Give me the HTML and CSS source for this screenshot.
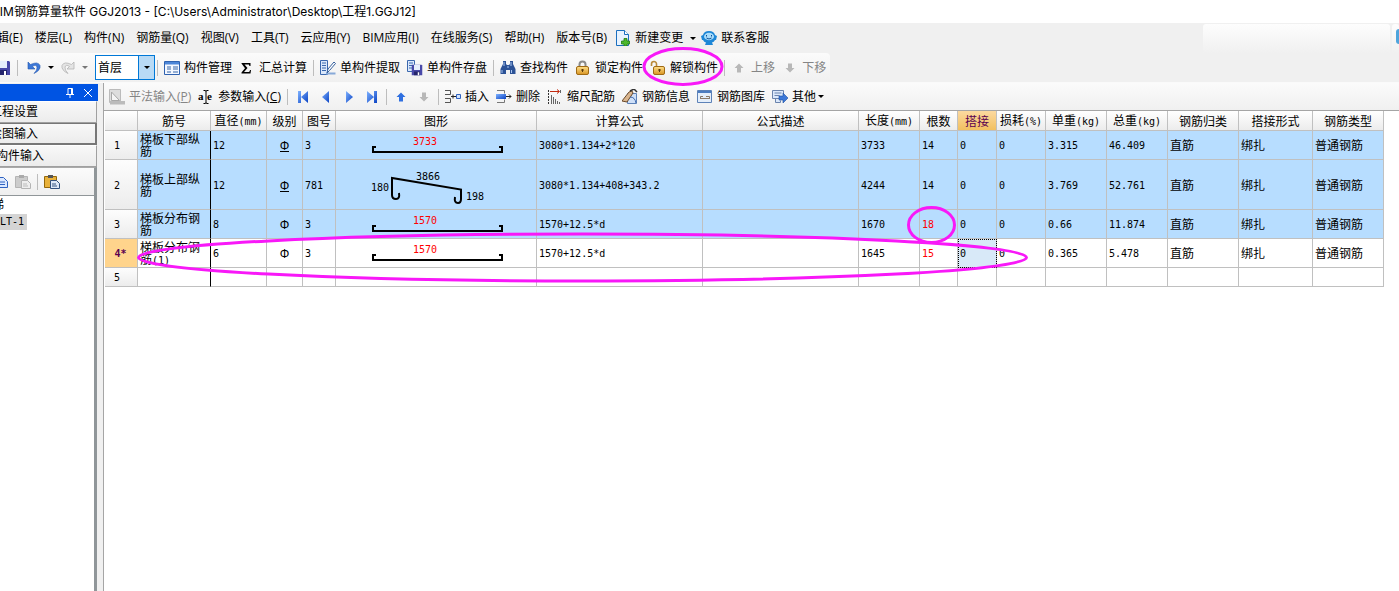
FILE: index.html
```html
<!DOCTYPE html>
<html lang="zh-CN">
<head>
<meta charset="utf-8">
<title>BIM钢筋算量软件 GGJ2013</title>
<link rel="stylesheet" href="styles.css">
</head>
<body>
<svg class="defs" width="0" height="0" aria-hidden="true">
  <defs>
    <linearGradient id="blue" x1="0" y1="0" x2="1" y2="1"><stop offset="0" stop-color="#7fb2ff"/><stop offset="1" stop-color="#0a43c4"/></linearGradient>
    <linearGradient id="gold" x1="0" y1="0" x2="0" y2="1"><stop offset="0" stop-color="#ffe08a"/><stop offset="1" stop-color="#d89422"/></linearGradient>
    <symbol id="up" viewBox="0 0 10 16"><path d="M5 3.5 9.5 8H7v4.500H3V8H.5z"/></symbol>
    <symbol id="down" viewBox="0 0 10 16"><path d="M5 12.500.5 8H3V3.500h4V8h2.500z"/></symbol>
    <symbol id="bar" viewBox="0 0 134 10"><path d="M6 3H3V8H132V3H129" fill="none" stroke="#000" stroke-width="2"/></symbol>
    <symbol id="save" viewBox="0 0 16 16"><path d="M1 1h13l1 1v13H1z" fill="#4848a8"/><path d="M4 1h8v7H4z" fill="#e6eefc"/><path d="M4 10h8v5H4z" fill="#24246c"/><path d="M9 11h2v4H9z" fill="#fff"/></symbol>
  </defs>
</svg>

<header class="title">BIM钢筋算量软件 GGJ2013 - [C:\Users\Administrator\Desktop\工程1.GGJ12]</header>

<nav class="menu">
  <button>编辑(E)</button><button>楼层(L)</button><button>构件(N)</button><button>钢筋量(Q)</button><button>视图(V)</button><button>工具(T)</button><button>云应用(Y)</button><button>BIM应用(I)</button><button>在线服务(S)</button><button>帮助(H)</button><button>版本号(B)</button>
  <button class="rich"><svg width="16" height="16" viewBox="0 0 16 16"><path d="M1.500.5h8l4 4v11h-12z" fill="#e8f3ff" stroke="#1b6fbf"/><path d="M9.500.5v4h4" fill="#fff" stroke="#1b6fbf"/><path d="M9 8.500h3v2.500h2.500v3H12V16H9v-2H6.500v-3H9z" fill="#4cb82c" stroke="#1e7a12" stroke-width=".8"/></svg>新建变更<i class="caret"></i></button>
  <button class="rich"><svg width="16" height="16" viewBox="0 0 16 16"><path d="M2 5Q3 1 8 1t6 4l2 1-1 4h-1q-1 2-3 2.500l1 2.500H4l1-2.500q-2-.5-3-2.500H1L0 6z" fill="#1d86d6"/><ellipse cx="8" cy="6.500" rx="5" ry="3.700" fill="#a9dcfb"/><path d="M5.500 5v1.500M10.500 5v1.500M5.500 8q2.500 2 5 0" stroke="#0d4f94" fill="none"/></svg>联系客服</button>
  <div class="glass"></div><div class="glass end"><span></span></div>
</nav>

<div class="bars">
  <div class="toolbar main-tools">
    <button class="icon" aria-label="保存"><svg width="16" height="16"><use href="#save"/></svg></button>
    <i class="sep"></i>
    <button class="icon undo" aria-label="撤销"><svg width="14" height="14" viewBox="0 0 14 14"><path d="M1 1v7h7L5.500 5.500Q9 3 10 6q.5 3-3 6.500Q14 9 13 4.500 11 0 3.500 3.500z" fill="#3c78d8" stroke="#2458b0" stroke-width=".6"/></svg><i class="caret"></i></button>
    <button class="icon redo" aria-label="恢复" disabled><svg width="14" height="14" viewBox="0 0 14 14"><path d="M13 1v7H6l2.500-2.500Q5 3 4 6q-.5 3 3 6.500Q0 9 1 4.500 3 0 10.500 3.500z" fill="#e4e4e4" stroke="#b4b4b4" stroke-width=".8"/></svg><i class="caret"></i></button>
    <div class="combo"><select aria-label="楼层"><option>首层</option></select></div>
    <i class="sep"></i>
    <button><svg width="16" height="16" viewBox="0 0 16 16"><path d="M.5 1.500h15v13H.5z" fill="#f4f8ff" stroke="#2f62b0"/><path d="M1 2h14v2.500H1z" fill="#4c86d8"/><path d="M3 7h4M3 9h4M3 12h4M9 7h5M9 9h5M9 12h5" stroke="#3465a8"/></svg>构件管理</button>
    <button><svg width="16" height="16" viewBox="0 0 16 16"><path d="M2.500 3.500V3h9v3h-1l-.7-1.500H5.500L8.500 8l-3.500 4h5.200l.9-2h.9l-.5 3.500h-9v-1L6 8.200z" fill="#000"/></svg>汇总计算</button>
    <i class="sep"></i>
    <button><svg width="16" height="16" viewBox="0 0 16 16"><path d="M.5.5h7v14h-7z" fill="#dbe8fb" stroke="#3b68ae"/><path d="M2 3h4M2 5.500h4M2 8h4M2 10.500h4" stroke="#3b68ae"/><path d="M6 12.500h9.500v2H6z" fill="#87a9d8"/><path d="m7 13 1-4 6-7 1.500 1.500-6 7z" fill="#fff" stroke="#345f9c"/></svg>单构件提取</button>
    <button><svg width="16" height="16" viewBox="0 0 16 16"><path d="M.5.5h7v11h-7z" fill="#dbe8fb" stroke="#3b68ae"/><path d="M2 3h4M2 5.500h3M2 8h3" stroke="#3b68ae"/><svg x="4" y="4" width="12" height="12"><use href="#save"/></svg></svg>单构件存盘</button>
    <i class="sep"></i>
    <button><svg width="16" height="16" viewBox="0 0 16 16"><path d="M3 1h3v3l1 1h2l1-1V1h3v3l2.500 5v5H10v-4H6v4H.5V9L3 4z" fill="#2c5296"/><path d="M4 2v4M11 2v4M2 10v3M11.500 10v3M7 7h2" stroke="#a9c6f2"/></svg>查找构件</button>
    <button><svg width="16" height="16" viewBox="0 0 16 16"><path d="M4.500 7V4.500a3 3 0 0 1 6 0V7" fill="none" stroke="#8b8b8b" stroke-width="2"/><rect x="1.500" y="6.500" width="12" height="8" rx="1.500" fill="url(#gold)" stroke="#a06a14"/><path d="M7.500 9v3M6 10h3" stroke="#5c3a08"/></svg>锁定构件</button>
    <button><svg width="16" height="16" viewBox="0 0 16 16"><path d="M1.500 6V4a2.500 2.500 0 0 1 5 0v4" fill="none" stroke="#b98a3a" stroke-width="1.600"/><rect x="3.500" y="6.500" width="11" height="8" rx="1.500" fill="url(#gold)" stroke="#a06a14"/><path d="M9.500 9v3M8 10h3" stroke="#5c3a08"/></svg>解锁构件</button>
    <i class="sep"></i>
    <button disabled><svg class="gray" width="16" height="16"><use href="#up"/></svg>上移</button>
    <button disabled><svg class="gray" width="16" height="16"><use href="#down"/></svg>下移</button>
  </div>
</div>

<div class="work">
  <aside class="side">
    <div class="side-head">
      <button aria-label="固定"><svg width="10" height="10" viewBox="0 0 10 10"><path d="M3 .5h4.500V6M3 .5V6M1 6.500h8M5 7v3M6.500 1v5" stroke="#fff" fill="none"/></svg></button>
      <button aria-label="关闭"><svg width="10" height="10" viewBox="0 0 10 10"><path d="m1 1 8 8M9 1 1 9" stroke="#fff"/></svg></button>
    </div>
    <button class="nav">工程设置</button>
    <button class="nav active">绘图输入</button>
    <button class="nav wide">单构件输入</button>
    <div class="side-box">
      <div class="side-tools">
        <button aria-label="复制"><svg width="16" height="16" viewBox="0 0 16 16"><path d="M3.500 3.500h8l4 4v6h-12z" fill="#dbe8ff" stroke="#2f62c0"/><path d="M6 8h7M6 10.500h7" stroke="#2f62c0"/></svg></button>
        <button aria-label="粘贴" disabled><svg width="16" height="16" viewBox="0 0 16 16"><path d="M.5 2.500h12v11H.5z" fill="#ccc" stroke="#b4b4b4"/><path d="M4 1h5v3H4z" fill="#aaa"/><path d="M6.500 6.500h6l3 3v5h-9z" fill="#eee" stroke="#b4b4b4"/><path d="M8 10h4M8 12h5" stroke="#bbb"/></svg></button>
        <i class="sep"></i>
        <button aria-label="粘贴到"><svg width="16" height="16" viewBox="0 0 16 16"><path d="M.5 2.500h12v11H.5z" fill="#e8b13a" stroke="#94680c"/><path d="M4 1h5v3H4z" fill="#555"/><path d="M6.500 6.500h6l3 3v5h-9z" fill="#dfe9f8" stroke="#34527f"/><path d="M8 10h4M8 12h5" stroke="#34527f"/></svg></button>
      </div>
      <ul class="tree"><li>梯</li><li><span class="mono picked">LT-1</span></li></ul>
    </div>
  </aside>

  <main class="pane">
    <div class="toolbar edit-tools">
      <button disabled><svg width="16" height="16" viewBox="0 0 16 16"><path d="M.5.500h11v13H.5z" fill="#ddd" stroke="#bbb"/><path d="m2.500 3 8 8.500h-8z" fill="#f4f4f4" stroke="#a8a8a8"/><path d="M1 12h15v3.500H1z" fill="#bbb"/></svg><span>平法输入(<u>P</u>)</span></button>
      <button><svg width="16" height="16" viewBox="0 0 16 16"><path d="M5.500 1.500h1.500q1 0 1 1 0-1 1-1h1.500M8 2.500v11M5.500 14.500h1.500q1 0 1-1 0 1 1 1h1.500" fill="none" stroke="#000"/><text class="ae" x="0" y="11">a</text><text class="ae" x="9" y="11">e</text></svg><span>参数输入(<u>C</u>)</span></button>
      <i class="sep lead"></i>
      <button class="step" aria-label="首个"><svg width="12" height="12" viewBox="0 0 12 12"><path d="M1 0h3v12H1zM11 0v12L4 6z" fill="url(#blue)"/></svg></button>
      <button class="step" aria-label="上一个"><svg width="12" height="12" viewBox="0 0 12 12"><path d="M9 0v12L2 6z" fill="url(#blue)"/></svg></button>
      <button class="step" aria-label="下一个"><svg width="12" height="12" viewBox="0 0 12 12"><path d="M3 0v12l7-6z" fill="url(#blue)"/></svg></button>
      <button class="step" aria-label="末个"><svg width="12" height="12" viewBox="0 0 12 12"><path d="M1 0v12l7-6zM8 0h3v12H8z" fill="url(#blue)"/></svg></button>
      <i class="sep"></i>
      <button class="step" aria-label="上移行"><svg width="12" height="16" fill="#2f6fe0"><use href="#up"/></svg></button>
      <button class="step" aria-label="下移行" disabled><svg class="gray" width="12" height="16"><use href="#down"/></svg></button>
      <i class="sep"></i>
      <button><svg width="16" height="16" viewBox="0 0 16 16"><path d="M0 1.500h5.500v4H0M0 9.500h5.500v4H0" fill="none" stroke="#555"/><path d="M6 7.500h5M8 5.500v4" stroke="#222"/><path d="M11.500 5.500h4v4h-4z" fill="#cfe2ff" stroke="#2f62c0"/></svg>插入</button>
      <button><svg width="16" height="16" viewBox="0 0 16 16"><path d="M1 1.500h7.500v3M1 13.500h7.500v-3" fill="none" stroke="#777"/><path d="M0 5h10v5H0z" fill="url(#blue)"/><path d="M10 7.500h5M13 5.500l2 2-2 2" stroke="#222" fill="none"/></svg>删除</button>
      <button><svg width="16" height="16" viewBox="0 0 16 16"><path d="M3 2.500h9M10 .500l2.500 2-2.500 2" stroke="#c22a10" fill="none"/><path d="M1.500 1v14" stroke="#333" stroke-dasharray="2 1"/><path d="M13.500 1v3M4.500 6v9M6.500 8v7M8.500 10v5M10.500 12v3M12.500 13v2" stroke="#666"/></svg>缩尺配筋</button>
      <button><svg width="16" height="16" viewBox="0 0 16 16"><path d="M5.500 4.500h9v10h-9z" fill="#cfe0f8" stroke="#5d82b8"/><path d="m0 12 7-9 3-1 1 2-6 9z" fill="#d9b58e" stroke="#6b4a2a"/><path d="M8 2 12 0l3 3" stroke="#333" fill="none" stroke-width="1.500"/><path d="M8 8q5 0 6 6" stroke="#3b68ae" fill="none"/></svg>钢筋信息</button>
      <button><svg width="16" height="16" viewBox="0 0 16 16"><path d="M.5 1.500h14v12H.5z" fill="#e4eefa" stroke="#5d82b8"/><path d="M1 2h13v2H1z" fill="#4c7cc0"/><path d="M3.500 10V7.500H6M9 7.500h3.500V10M3.500 9.500h9" stroke="#8a7a6a" fill="none"/></svg>钢筋图库</button>
      <button><svg width="16" height="16" viewBox="0 0 16 16"><path d="M.5 1.500h11v8h-11zM3.500 9.500v4h5v-2" fill="#dbe8fb" stroke="#6b84ad"/><path d="M2.500 4h7M2.500 6.500h5" stroke="#6b84ad"/><path d="M7 7h4V4l5 5-5 5v-3H7z" fill="#3c78d8" stroke="#1c4da0" stroke-width=".6"/></svg>其他<i class="caret near"></i></button>
    </div>

    <div class="grid-wrap">
    <table class="grid">
      <colgroup><col class="w33"><col class="w73"><col class="w56"><col class="w36"><col class="w33"><col class="w201"><col class="w166"><col class="w156"><col class="w61"><col class="w38"><col class="w39"><col class="w49"><col class="w61"><col class="w61"><col class="w71"><col class="w74"><col class="w71"></colgroup>
      <thead>
        <tr><th></th><th>筋号</th><th>直径<span class="mono">(mm)</span></th><th>级别</th><th>图号</th><th>图形</th><th>计算公式</th><th>公式描述</th><th>长度<span class="mono">(mm)</span></th><th>根数</th><th class="hot">搭接</th><th>损耗<span class="mono">(%)</span></th><th>单重<span class="mono">(kg)</span></th><th>总重<span class="mono">(kg)</span></th><th>钢筋归类</th><th>搭接形式</th><th>钢筋类型</th></tr>
      </thead>
      <tbody>
        <tr class="sel"><th>1</th><td class="name">梯板下部纵筋</td><td>12</td><td class="grade"><span class="bar">Φ</span></td><td>3</td><td class="shape"><div class="straight"><span>3733</span><svg width="134" height="10"><use href="#bar"/></svg></div></td><td>3080*1.134+2*120</td><td></td><td>3733</td><td>14</td><td>0</td><td>0</td><td>3.315</td><td>46.409</td><td class="cjk">直筋</td><td class="cjk">绑扎</td><td class="cjk">普通钢筋</td></tr>
        <tr class="sel tall"><th>2</th><td class="name">梯板上部纵筋</td><td>12</td><td class="grade"><span class="bar">Φ</span></td><td>781</td><td class="shape"><svg class="bent" width="134" height="40" viewBox="0 0 134 40"><path d="M29 28q1 6-3 6-4 0-4-4V13l69 11.500V34q0 4-3 4-4 0-3-6" fill="none" stroke="#000" stroke-width="2"/><text x="1" y="26">180</text><text x="46" y="15">3866</text><text x="96" y="35">198</text></svg></td><td>3080*1.134+408+343.2</td><td></td><td>4244</td><td>14</td><td>0</td><td>0</td><td>3.769</td><td>52.761</td><td class="cjk">直筋</td><td class="cjk">绑扎</td><td class="cjk">普通钢筋</td></tr>
        <tr class="sel"><th>3</th><td class="name">梯板分布钢筋</td><td>8</td><td class="grade">Φ</td><td>3</td><td class="shape"><div class="straight"><span>1570</span><svg width="134" height="10"><use href="#bar"/></svg></div></td><td>1570+12.5*d</td><td></td><td>1670</td><td class="red">18</td><td>0</td><td>0</td><td>0.66</td><td>11.874</td><td class="cjk">直筋</td><td class="cjk">绑扎</td><td class="cjk">普通钢筋</td></tr>
        <tr><th class="cur">4*</th><td class="name">梯板分布钢筋<span class="mono">(1)</span></td><td>6</td><td class="grade">Φ</td><td>3</td><td class="shape"><div class="straight"><span>1570</span><svg width="134" height="10"><use href="#bar"/></svg></div></td><td>1570+12.5*d</td><td></td><td>1645</td><td class="red">15</td><td class="focus">0</td><td>0</td><td>0.365</td><td>5.478</td><td class="cjk">直筋</td><td class="cjk">绑扎</td><td class="cjk">普通钢筋</td></tr>
        <tr class="short"><th>5</th><td></td><td></td><td></td><td></td><td></td><td></td><td></td><td></td><td></td><td></td><td></td><td></td><td></td><td></td><td></td><td></td></tr>
      </tbody>
    </table>
    </div>
  </main>
</div>

<svg class="marks" width="1100" height="300" aria-hidden="true">
  <ellipse cx="683" cy="66.500" rx="39" ry="18"/>
  <ellipse cx="931.500" cy="225" rx="23" ry="17.500"/>
  <ellipse cx="582.500" cy="257.500" rx="444" ry="23.500"/>
</svg>
</body>
</html>
```

FILE: styles.css
```css
* { box-sizing: border-box; }
body {
  margin: 0;
  min-height: 100vh;
  display: flex;
  flex-direction: column;
  position: relative;
  overflow: hidden;
  background: #f0f0f0;
  color: #000;
  font: 12px/16px "Open Sans", "Noto Sans CJK SC", sans-serif;
}
button {
  display: inline-flex;
  align-items: center;
  flex: none;
  gap: 4px;
  margin: 0;
  padding: 0;
  border: 0;
  background: none;
  color: inherit;
  font: inherit;
  white-space: nowrap;
}
button:disabled { color: #858585; }
svg { display: block; flex: none; }
.defs, .marks { position: absolute; left: 0; top: 0; }
.marks { pointer-events: none; fill: none; stroke: #f818f8; stroke-width: 3; }
.gray { fill: #b8b8b8; }

.title {
  height: 23px;
  background: #fff;
  font-family: Inter, "Noto Sans CJK SC", sans-serif;
  line-height: 23px;
  text-indent: -8px;
  white-space: nowrap;
}
.menu {
  display: flex;
  align-items: center;
  gap: 12px;
  height: 30px;
}
.menu > button:first-child { margin-left: -15px; }
.menu .rich { margin: 0 -3px 0 -4px; }
.caret {
  border: 3px solid transparent;
  border-top-color: #000;
  border-bottom: 0;
  margin-left: 3px;
}
button:disabled .caret { border-top-color: #777; }
.caret.near { margin-left: -2px; }
.glass {
  width: 187px;
  height: 29px;
  margin-left: auto;
  border-radius: 3px 3px 0 0;
  background: linear-gradient(#fdfdfd, #f0f0f0);
}
.glass.end { width: 7px; margin-left: -10px; padding: 5px 0 0 4px; }
.glass.end span { display: block; height: 15px; border-radius: 3px 0 0 3px; background: #4ea4dc; }

.bars { border-bottom: 1px solid #fafafa; }
.toolbar {
  display: flex;
  align-items: center;
  gap: 7px;
  background: linear-gradient(#fbfbfb, #f0f0f0);
}
.main-tools { width: max-content; height: 29px; padding-right: 4px; border-radius: 0 4px 4px 0; }
.main-tools > .icon:first-child { margin-left: -5px; }
.sep { flex: none; width: 1px; height: 16px; margin: 0 -1px; background: #bdbdbd; }
.sep.lead { margin-right: 0; }
.main-tools .undo { margin-left: 3px; }
.combo { position: relative; width: 60px; height: 25px; margin-right: -4px; }
.combo select {
  width: 100%;
  height: 100%;
  padding: 0 2px;
  border: 1px solid #0078d7;
  border-radius: 0;
  appearance: none;
  background: #fff;
  color: #000;
  font: inherit;
}
.combo::before {
  content: "";
  position: absolute;
  inset: 0 0 0 auto;
  width: 15px;
  border: 1px solid #0078d7;
  background: #b8daf5;
  pointer-events: none;
}
.combo::after {
  content: "";
  position: absolute;
  right: 5px;
  top: 11px;
  border: 3px solid transparent;
  border-top-color: #000;
  border-bottom: 0;
  pointer-events: none;
}

.work { display: flex; flex: 1; gap: 5px; }
.side { display: flex; flex-direction: column; flex: none; width: 98px; padding-top: 1px; }
.side-head {
  display: flex;
  justify-content: flex-end;
  align-items: center;
  gap: 8px;
  height: 17px;
  padding-right: 5px;
  background: #0054e3;
}
.nav {
  height: 22px;
  width: 97px;
  border: 1px solid #a0a0a0;
  border-left: 0;
  border-top-color: #fff;
  background: linear-gradient(#f8f8f8, #ececec);
  text-indent: -10px;
}
.nav.active { border: 1px solid #777; border-width: 1px 2px 2px 0; }
.nav.wide { text-indent: -16px; }
.side-box {
  display: flex;
  flex-direction: column;
  flex: 1;
  width: 97px;
  border-right: 3px solid #909699;
  border-top: 1px solid #aaa;
}
.side-tools {
  display: flex;
  align-items: center;
  gap: 7px;
  height: 28px;
  margin-left: -8px;
  background: linear-gradient(#fbfbfb, #efefef);
  border-bottom: 1px solid #909699;
}
.tree { flex: 1; margin: 0; padding: 1px 0 0; background: #fff; list-style: none; }
.tree li { height: 17px; text-indent: -8px; }
.mono { font: 10px/12px "DejaVu Sans Mono", monospace; }
.picked { display: block; width: 27px; height: 16px; line-height: 16px; background: #d4d4d4; text-indent: 0; }

.pane { display: flex; flex-direction: column; flex: 1; min-width: 0; border-left: 1px solid #a5a5a5; background: #fff; }
.edit-tools { height: 28px; padding-left: 5px; border-bottom: 1px solid #a5a5a5; }
.edit-tools .step { width: 16px; justify-content: center; }
.ae { font: bold 11px "Liberation Serif", serif; }

.grid-wrap { padding-left: 1px; }
.grid {
  width: 1279px;
  table-layout: fixed;
  border-spacing: 0;
  font: 10px/12px "DejaVu Sans Mono", "Noto Sans CJK SC", monospace;
}
.grid th, .grid td {
  height: 29px;
  padding: 2px 2px 0;
  border: solid #c0c0c0;
  border-width: 0 1px 1px 0;
  font-weight: normal;
  text-align: left;
  vertical-align: middle;
  white-space: nowrap;
}
.grid thead th { height: 20px; padding: 2px 0 0; font-size: 12px; text-align: center; background: linear-gradient(#fff, #ececec); }
.grid thead .hot { background: linear-gradient(#fbd9a0, #f2c060); color: #5a0050; }
.grid tbody th { padding-right: 10px; text-align: center; background: linear-gradient(#fdfdfd, #ececec); }
.grid tbody .cur { padding-right: 3px; background: #ffd48c; color: #5a0050; font-weight: bold; }
.grid .sel td { background: #b7ddff; }
.grid .tall th, .grid .tall td { height: 50px; }
.grid .short th, .grid .short td { height: 19px; }
.grid td:nth-child(2) { border-right-color: #000; }
.grid .name { font-size: 12px; white-space: normal; word-break: break-all; }
.grid .cjk { font-size: 12px; }
.grid .red { color: #f00; }
.grid .grade { font: 12px/12px "Liberation Sans", sans-serif; text-align: center; }
.grade .bar { border-bottom: 1px solid #000; display: inline-block; height: 11px; line-height: 11px; }
.grid .focus { background: #d8e9f8; outline: 1px dotted #000; outline-offset: -1px; }
.grid .shape { padding: 0 1px 0 3px; text-align: center; }
.straight { display: flex; flex-direction: column; align-items: center; }
.straight span { padding-right: 24px; color: #f00; line-height: 12px; }
.straight svg { margin-top: -4px; }
.bent { margin: 0 auto; font-size: 10px; }
.w33 { width: 33px; } .w36 { width: 36px; } .w38 { width: 38px; } .w39 { width: 39px; }
.w49 { width: 49px; } .w56 { width: 56px; } .w61 { width: 61px; } .w71 { width: 71px; }
.w73 { width: 73px; } .w74 { width: 74px; } .w156 { width: 156px; } .w166 { width: 166px; } .w201 { width: 201px; }
```
